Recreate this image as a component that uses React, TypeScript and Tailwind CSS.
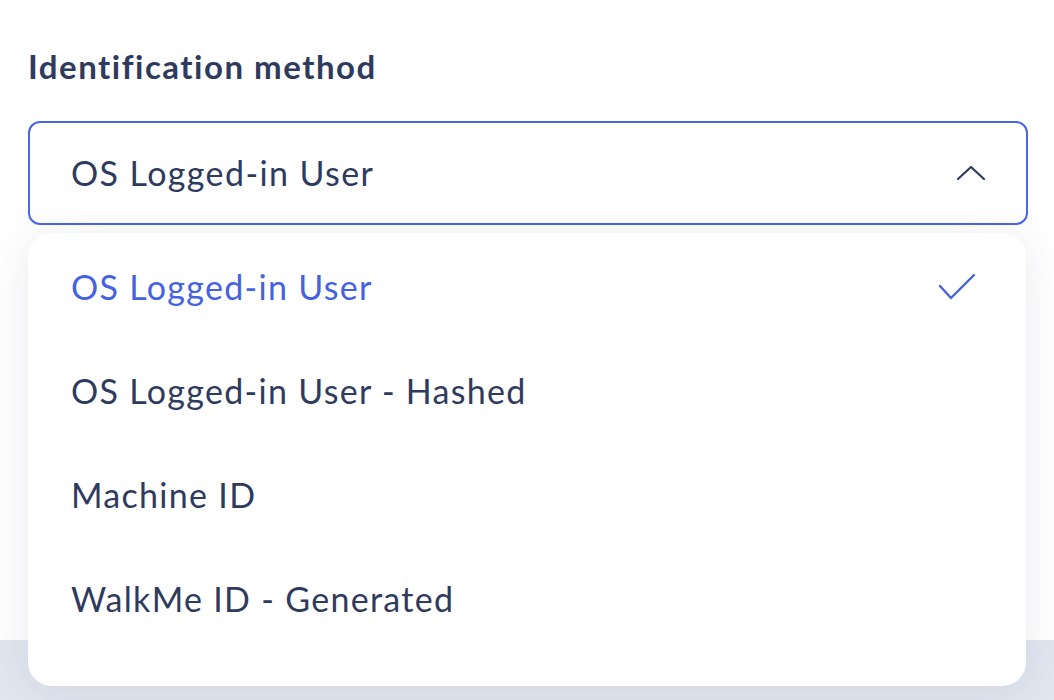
import React from 'react';

const OPTIONS = ['OS Logged-in User', 'OS Logged-in User - Hashed', 'Machine ID', 'WalkMe ID - Generated'];

const App: React.FC = () => {
  const selected = OPTIONS[0];
  return (
    <div className="w-[1054px] h-[700px] bg-white relative overflow-hidden font-['Lato',sans-serif] text-[#2f3b5e]">
      {/* page band behind the menu */}
      <div className="absolute left-0 right-0 bottom-0 h-[60px] bg-[#e2e6f0]" />

      <div className="relative px-[28px] pt-[46px]">
        <h2 className="text-[33px] leading-[40px] font-bold tracking-[1.5px]">Identification method</h2>

        {/* trigger */}
        <div className="mt-[35px] w-[1000px] h-[104px] rounded-[12px] border-2 border-[#4a66e6] flex items-center justify-between pl-[41px] pr-[40px]">
          <span className="text-[34px] tracking-[1.4px] leading-[40px]">{selected}</span>
          <svg width="30" height="16" viewBox="0 0 30 16" fill="none">
            <path d="M2 14 L15 2 L28 14" stroke="#2f3b5e" strokeWidth="2.2" strokeLinecap="round" strokeLinejoin="round" />
          </svg>
        </div>

        {/* menu */}
        <div className="mt-[8px] w-[998px] h-[453px] rounded-[24px] bg-white shadow-[0_4px_44px_rgba(47,59,94,0.1)] pt-[2px]">
          {OPTIONS.map((opt) => (
            <div key={opt} className="h-[104px] flex items-center justify-between pl-[43px] pr-[50px]">
              <span className={`text-[34px] tracking-[1.3px] leading-[40px] ${opt === selected ? 'text-[#4562e2]' : ''}`}>{opt}</span>
              {opt === selected && (
                <svg width="38" height="28" viewBox="0 0 38 28" fill="none">
                  <path d="M2 13 L13 25 L36 2" stroke="#4562e2" strokeWidth="2.4" strokeLinecap="round" strokeLinejoin="round" />
                </svg>
              )}
            </div>
          ))}
        </div>
      </div>
    </div>
  );
};

export default App;
